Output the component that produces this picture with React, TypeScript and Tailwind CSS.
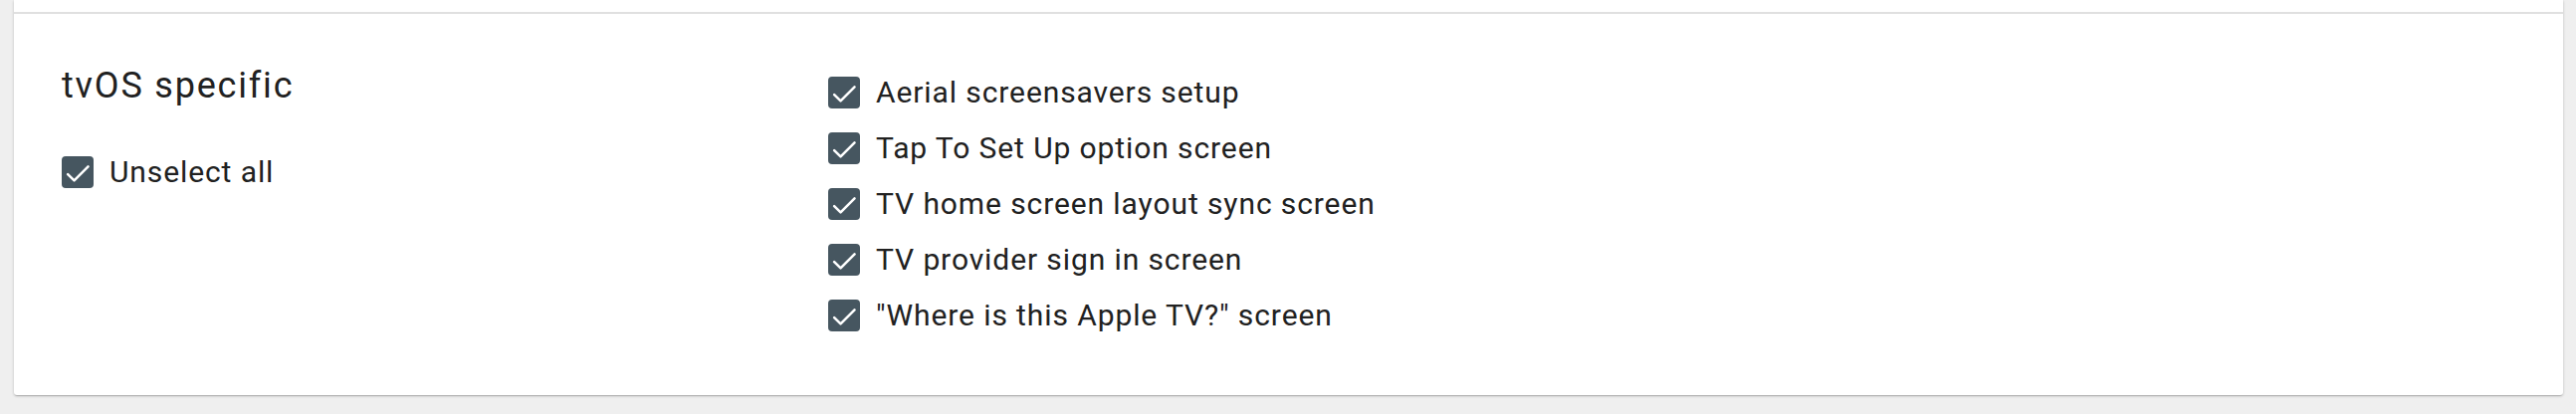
import React from 'react';

const OPTIONS = [
  'Aerial screensavers setup',
  'Tap To Set Up option screen',
  'TV home screen layout sync screen',
  'TV provider sign in screen',
  '"Where is this Apple TV?" screen',
];

const CheckBox: React.FC<{ label: string }> = ({ label }) => (
  <label className="flex items-center gap-[16px] h-[56px] cursor-pointer">
    <span className="flex items-center justify-center w-[32px] h-[32px] rounded-[4px] bg-[#465660] shrink-0">
      <svg viewBox="0 0 24 24" className="w-[32px] h-[32px]" fill="none">
        <path d="M4.6 13.6L9.4 18.3L19.9 7.8" stroke="#ffffff" strokeWidth={1.9} strokeLinecap="round" strokeLinejoin="round" />
      </svg>
    </span>
    <span className="text-[30px] leading-[56px] tracking-[0.9px] text-[#212121] whitespace-nowrap">{label}</span>
  </label>
);

export default function App() {
  return (
    <div className="min-h-screen w-full bg-[#efefef] pl-[14px] pr-[13px] pb-[19px]" style={{ fontFamily: 'Roboto, "Noto Sans", sans-serif' }}>
      <div className="bg-white rounded-b-[3px] shadow-[0_1px_3px_rgba(0,0,0,0.22),0_2px_1px_-1px_rgba(0,0,0,0.14)]">
        {/* tail of previous section */}
        <div className="h-[12px]" />

        {/* tvOS section */}
        <div className="border-t-2 border-[#e0e0e0] flex pl-[48px] pt-[51px] pb-[52px]">
          <div className="w-[770px] shrink-0">
            <h2 className="text-[36px] leading-[42px] tracking-[1.8px] font-normal text-[#212121] mb-[38px]">tvOS specific</h2>
            <CheckBox label="Unselect all" />
          </div>
          <div className="flex flex-col">
            {OPTIONS.map((opt) => (
              <CheckBox key={opt} label={opt} />
            ))}
          </div>
        </div>
      </div>
    </div>
  );
}
